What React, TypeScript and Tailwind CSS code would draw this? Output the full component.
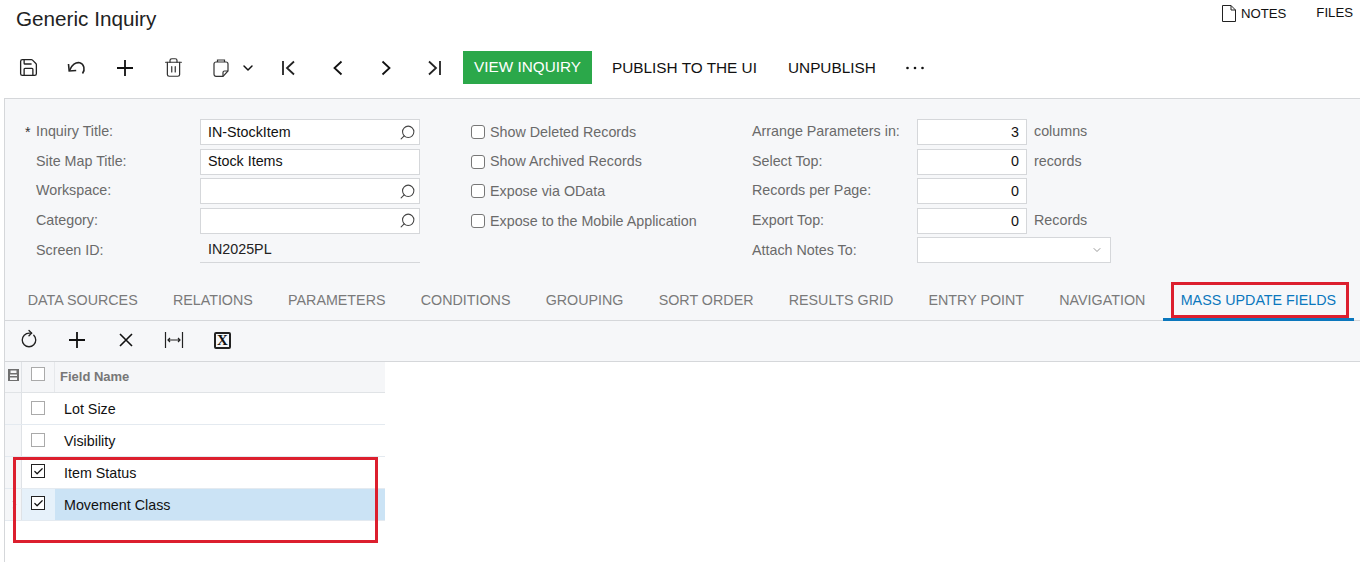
import React from "react";
import { Check, ChevronDown, ChevronRight, RotateCw, Save, Search, Trash2 } from "lucide-react";

const Clipboard = () => (
  <svg width="18" height="18" viewBox="0 0 18 18" fill="none" stroke="#333" strokeWidth="1.2">
    <path d="M4 3h10a2 2 0 0 1 2 2v7l-5 5.300H4a2 2 0 0 1-2-2V5a2 2 0 0 1 2-2Z" />
    <path d="M5.500 3V1h7v2M16 12h-3.500a1.500 1.500 0 0 0-1.500 1.500v3.800" />
  </svg>
);

const PlusIcon = () => (
  <svg width="18" height="18" viewBox="0 0 18 18" fill="none" stroke="#111" strokeWidth="1.800">
    <path d="M1 9h16M9 1v16" />
  </svg>
);

const CrossIcon = () => (
  <svg width="16" height="16" viewBox="0 0 16 16" fill="none" stroke="#111" strokeWidth="1.600">
    <path d="M2 2l12 12M14 2 2 14" />
  </svg>
);

const UndoIcon = () => (
  <svg width="19" height="16" viewBox="0 0 19 16" fill="none" stroke="#222" strokeWidth="1.600">
    <path d="M2.500 10.500C4.500 5 9 1.800 12.800 2.800 17 4 18.500 9.500 15.500 13.500" />
    <path d="M1.500 4 2.200 11l7-.500" />
  </svg>
);

const PrevIcon = () => (
  <svg width="18" height="18" viewBox="0 0 18 18" fill="none" stroke="#111" strokeWidth="1.800">
    <path d="M12.500 2.500 5.500 9l7 6.500" />
  </svg>
);

const NextIcon = () => (
  <svg width="18" height="18" viewBox="0 0 18 18" fill="none" stroke="#111" strokeWidth="1.800">
    <path d="M5.500 2.500 12.500 9l-7 6.500" />
  </svg>
);

const FirstIcon = () => (
  <svg width="18" height="18" viewBox="0 0 18 18" fill="none" stroke="#222" strokeWidth="1.800">
    <path d="M3 2v14M14 2.500 7 9l7 6.500" />
  </svg>
);

const LastIcon = () => (
  <svg width="18" height="18" viewBox="0 0 18 18" fill="none" stroke="#222" strokeWidth="1.800">
    <path d="M15 2v14M4 2.500 11 9l-7 6.500" />
  </svg>
);

const FitIcon = () => (
  <svg width="20" height="18" viewBox="0 0 20 18" fill="none" stroke="#222" strokeWidth="1.200">
    <path d="M1.500 1v16M18.500 1v16M4 9h12M6 7 4 9l2 2M14 7l2 2-2 2" />
  </svg>
);

const Dots = () => (
  <svg width="20" height="6" viewBox="0 0 20 6" fill="#111">
    <circle cx="2.500" cy="3" r="1.300" />
    <circle cx="10" cy="3" r="1.300" />
    <circle cx="17.500" cy="3" r="1.300" />
  </svg>
);

const ExcelIcon = () => (
  <div className="w-[17px] h-[17px] border-2 border-[#222] rounded-[2px] flex items-center justify-center text-[15px] leading-none font-bold text-[#111] font-['Liberation_Serif',serif]">
    X
  </div>
);

const GridIcon = () => (
  <svg width="13" height="14" viewBox="0 0 13 14" fill="#6f6f6f">
    <path d="M1 1h11v12H1Zm2.500 1.500V5h6V2.500ZM3 6.500V8h7V6.500ZM3 9.500V12h7V9.500Z" fillRule="evenodd" />
  </svg>
);

const TextBox = ({ value = "", search = false, right = false, w = "w-[220px]" }: { value?: string; search?: boolean; right?: boolean; w?: string }) => (
  <div className={`${w} h-[26px] bg-white border border-[#d5d7da] flex items-center px-[7px] text-[#111] ${right ? "justify-end" : "justify-between"}`}>
    <span className="pt-[1px]">{value}</span>
    {search && <Search size={17} strokeWidth={1.500} className="text-[#444] -scale-x-100 -mr-[4px]" />}
  </div>
);

const Label = ({ children }: { children: string }) => <div className="text-[#6a6a6a] whitespace-nowrap">{children}</div>;

const CheckRow = ({ label }: { label: string }) => (
  <div className="h-[26px] flex items-center gap-[5px] text-[#6a6a6a] whitespace-nowrap">
    <span className="w-[14px] h-[14px] bg-white border border-[#777] rounded-[3px]" />
    <span className="pt-[1px]">{label}</span>
  </div>
);

const tabs = ["DATA SOURCES", "RELATIONS", "PARAMETERS", "CONDITIONS", "GROUPING", "SORT ORDER", "RESULTS GRID", "ENTRY POINT", "NAVIGATION"];

const GridRow = ({ label, checked, active }: { label: string; checked?: boolean; active?: boolean }) => (
  <div className="h-[32px] flex border-b border-[#e4eaf0]">
    <div className="w-[17px] bg-[#f5f6f8] border-r border-[#dfe2e6] flex items-center text-[#c08a8a]">
      {active && <ChevronRight size={11} strokeWidth={2} className="ml-[4px]" />}
    </div>
    <div className={`w-[33px] flex justify-center pr-[1px] ${checked ? "pt-[7px]" : "pt-[8px]"} ${active ? "bg-[#e6f1fa]" : ""}`}>
      <span className={`w-[14px] h-[14px] flex items-center justify-center border ${checked ? "border-[#222] bg-white" : "border-[#aaa] bg-white"}`}>
        {checked && <Check size={11} strokeWidth={2.600} className="text-[#111]" />}
      </span>
    </div>
    <div className={`flex-1 pl-[9px] pt-[2px] flex items-center text-[#111] ${active ? "bg-[#cbe3f5]" : ""}`}>{label}</div>
  </div>
);

export default function App() {
  return (
    <div className="relative w-[1360px] h-[562px] overflow-hidden bg-white text-[14.300px] font-['Liberation_Sans',Arial,sans-serif]">
      {/* header */}
      <div className="h-[98px] relative">
        <div className="flex justify-between h-[51px]">
          <h1 className="pl-[16px] pt-[7px] text-[20.700px] leading-[24px] text-[#222]">Generic Inquiry</h1>
          <div className="flex items-start gap-[30px] pt-[5px] pr-[7px] text-[13.200px] text-[#111]">
            <span className="flex items-center gap-[4px] leading-[16px]">
              <svg width="16" height="17" viewBox="0 0 16 17" fill="none" stroke="#222" strokeWidth="1">
                <path d="M1.500.500h8.500l4.500 4.500v11.500h-13ZM10 .500V5h4.500" />
              </svg>
              NOTES
            </span>
            <span className="leading-[16px]">FILES</span>
          </div>
        </div>
        <div className="flex items-center h-[33px] text-[#111]">
          <div className="w-[56px] pl-[17.500px]"><Save size={21} strokeWidth={1.500} className="text-[#222]" /></div>
          <div className="w-[48px] pl-[11px]"><UndoIcon /></div>
          <div className="w-[48px] pl-[12px]"><PlusIcon /></div>
          <div className="w-[48px] pl-[10.500px]"><Trash2 size={21} strokeWidth={1.400} className="text-[#333]" /></div>
          <div className="w-[35px] pl-[12px]"><Clipboard /></div>
          <div className="w-[40px] pl-[5px]"><ChevronDown size={16} strokeWidth={2.200} /></div>
          <div className="w-[50px] pl-[5px]"><FirstIcon /></div>
          <div className="w-[48px] pl-[4px]"><PrevIcon /></div>
          <div className="w-[48px] pl-[4px]"><NextIcon /></div>
          <div className="w-[42px] pl-[4px]"><LastIcon /></div>
          <button className="w-[129px] h-[33px] bg-[#2ba84a] text-white text-[15.300px]">VIEW INQUIRY</button>
          <span className="ml-[20px] text-[15.350px]">PUBLISH TO THE UI</span>
          <span className="ml-[31px] text-[15.350px]">UNPUBLISH</span>
          <div className="ml-[29px]"><Dots /></div>
        </div>
      </div>

      {/* form panel */}
      <div className="ml-[4px] border-l border-[#d5d7da] h-[464px] flex flex-col">
        <div className="h-[223px] bg-[#f6f7f9] border-t border-[#d5d7da]">
          <div className="flex pt-[20px] h-[183px]">
            <div className="w-[195px] pl-[31px] grid auto-rows-[26px] gap-y-[3.600px] items-center">
              <div className="relative">
                <span className="absolute -left-[11px] top-[1px] text-[#333]">*</span>
                <Label>Inquiry Title:</Label>
              </div>
              <Label>Site Map Title:</Label>
              <Label>Workspace:</Label>
              <Label>Category:</Label>
              <Label>Screen ID:</Label>
            </div>
            <div className="w-[271px] grid auto-rows-[26px] gap-y-[3.600px]">
              <TextBox value="IN-StockItem" search />
              <TextBox value="Stock Items" />
              <TextBox search />
              <TextBox search />
              <div className="w-[220px] h-[26px] border-b border-[#d5d7da] px-[8px] flex items-center text-[#222]">IN2025PL</div>
            </div>
            <div className="w-[281px] grid auto-rows-[26px] gap-y-[3.600px] content-start">
              <CheckRow label="Show Deleted Records" />
              <CheckRow label="Show Archived Records" />
              <CheckRow label="Expose via OData" />
              <CheckRow label="Expose to the Mobile Application" />
            </div>
            <div className="w-[165px] grid auto-rows-[26px] gap-y-[3.600px] items-center">
              <Label>Arrange Parameters in:</Label>
              <Label>Select Top:</Label>
              <Label>Records per Page:</Label>
              <Label>Export Top:</Label>
              <Label>Attach Notes To:</Label>
            </div>
            <div className="grid auto-rows-[26px] gap-y-[3.600px]">
              {[["3", "columns"], ["0", "records"], ["0", ""], ["0", "Records"]].map(([n, suffix], i) => (
                <div key={i} className="flex items-center gap-[7px] text-[#6a6a6a]">
                  <TextBox value={n} right w="w-[110px]" />
                  {suffix}
                </div>
              ))}
              <div className="w-[194px] h-[26px] bg-white border border-[#d5d7da] flex items-center justify-end pr-[7px]">
                <ChevronDown size={12} strokeWidth={1.500} className="text-[#777]" />
              </div>
            </div>
          </div>
          {/* tabs */}
          <div className="h-[39px] flex items-start pl-[5.200px] text-[#7a7a7a] border-b border-[#d5d7da]">
            {tabs.map((t) => (
              <div key={t} className="px-[17.600px] pt-[8px] leading-[20px] whitespace-nowrap">{t}</div>
            ))}
            <div className="w-[191px] h-[39px] border-b-[3px] border-[#0b77bd] text-center pt-[8px] leading-[20px] text-[#0b77bd] whitespace-nowrap">MASS UPDATE FIELDS</div>
          </div>
        </div>

        {/* grid toolbar */}
        <div className="h-[41px] pb-[2px] bg-[#f6f7f9] border-b border-[#d5d7da] flex items-center text-[#222] shrink-0">
          <div className="w-[48px] pl-[15px]"><RotateCw size={18} strokeWidth={1.800} className="-rotate-45" /></div>
          <div className="w-[48px] pl-[15px]"><PlusIcon /></div>
          <div className="w-[48px] pl-[17px]"><CrossIcon /></div>
          <div className="w-[48px] pl-[15px]"><FitIcon /></div>
          <div className="pl-[17px]"><ExcelIcon /></div>
        </div>

        {/* grid */}
        <div className="w-[380px]">
          <div className="h-[31px] flex border-b border-[#e0e3e6] bg-[#f5f6f8]">
            <div className="w-[17px] border-r border-[#dfe2e6] flex justify-center pt-[6px]"><GridIcon /></div>
            <div className="w-[33px] border-r border-[#e6e8eb] flex justify-center pt-[5px] pr-[1px]">
              <span className="w-[14px] h-[14px] bg-white border border-[#aaa]" />
            </div>
            <div className="pl-[5px] flex items-center text-[13px] font-bold text-[#777]">Field Name</div>
          </div>
          <GridRow label="Lot Size" />
          <GridRow label="Visibility" />
          <GridRow label="Item Status" checked />
          <GridRow label="Movement Class" checked active />
        </div>
      </div>

      {/* annotation boxes */}
      <div className="absolute left-[13px] top-[457px] w-[365px] h-[86px] border-[3px] border-[#dc1f2e]" />
      <div className="absolute left-[1171px] top-[282px] w-[178px] h-[36px] border-[3px] border-[#dc1f2e]" />
    </div>
  );
}
